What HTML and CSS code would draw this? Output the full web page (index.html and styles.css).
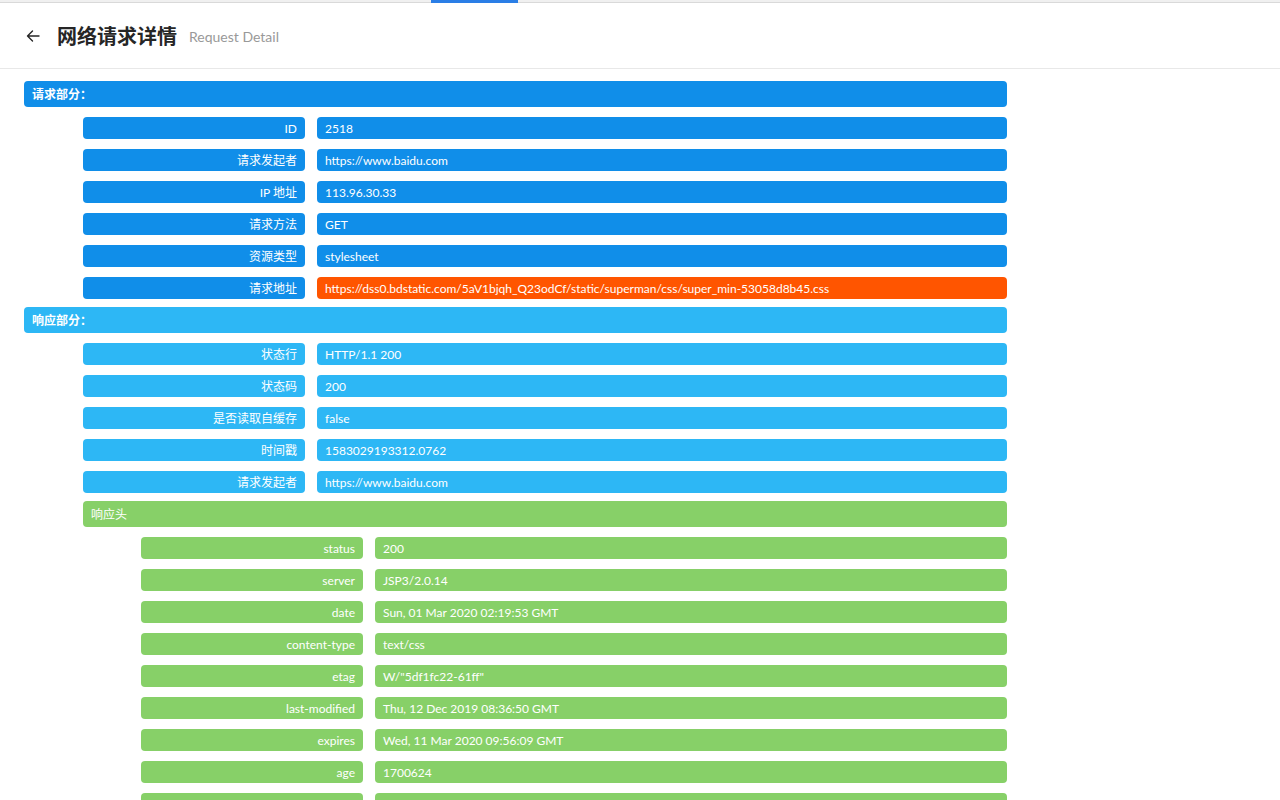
FILE: index.html
```html
<!DOCTYPE html>
<html lang="zh">
<head>
<meta charset="utf-8">
<title>网络请求详情</title>
<link rel="stylesheet" href="styles.css">
</head>
<body>
<div class="topline"><span class="topline-active"></span></div>
<header class="page-header">
  <svg class="back" width="16" height="16" viewBox="0 0 16 16"><path d="M14 8H2.5M7.5 3L2.5 8l5 5" fill="none" stroke="#262626" stroke-width="1.4" stroke-linecap="round" stroke-linejoin="round"/></svg>
  <h1 class="title">网络请求详情</h1>
  <span class="subtitle">Request Detail</span>
</header>
<main class="content">
  <div class="section blue">请求部分：</div>
  <div class="rows lvl1">
    <div class="row"><div class="key blue">ID</div><div class="val blue">2518</div></div>
    <div class="row"><div class="key blue">请求发起者</div><div class="val blue">https://www.baidu.com</div></div>
    <div class="row"><div class="key blue">IP 地址</div><div class="val blue">113.96.30.33</div></div>
    <div class="row"><div class="key blue">请求方法</div><div class="val blue">GET</div></div>
    <div class="row"><div class="key blue">资源类型</div><div class="val blue">stylesheet</div></div>
    <div class="row"><div class="key blue">请求地址</div><div class="val orange">https://dss0.bdstatic.com/5aV1bjqh_Q23odCf/static/superman/css/super_min-53058d8b45.css</div></div>
  </div>
  <div class="section cyan">响应部分：</div>
  <div class="rows lvl1">
    <div class="row"><div class="key cyan">状态行</div><div class="val cyan">HTTP/1.1 200</div></div>
    <div class="row"><div class="key cyan">状态码</div><div class="val cyan">200</div></div>
    <div class="row"><div class="key cyan">是否读取自缓存</div><div class="val cyan">false</div></div>
    <div class="row"><div class="key cyan">时间戳</div><div class="val cyan">1583029193312.0762</div></div>
    <div class="row last"><div class="key cyan">请求发起者</div><div class="val cyan">https://www.baidu.com</div></div>
    <div class="subsection green">响应头</div>
    <div class="rows lvl2">
      <div class="row"><div class="key green">status</div><div class="val green">200</div></div>
      <div class="row"><div class="key green">server</div><div class="val green">JSP3/2.0.14</div></div>
      <div class="row"><div class="key green">date</div><div class="val green">Sun, 01 Mar 2020 02:19:53 GMT</div></div>
      <div class="row"><div class="key green">content-type</div><div class="val green">text/css</div></div>
      <div class="row"><div class="key green">etag</div><div class="val green">W/"5df1fc22-61ff"</div></div>
      <div class="row"><div class="key green">last-modified</div><div class="val green">Thu, 12 Dec 2019 08:36:50 GMT</div></div>
      <div class="row"><div class="key green">expires</div><div class="val green">Wed, 11 Mar 2020 09:56:09 GMT</div></div>
      <div class="row"><div class="key green">age</div><div class="val green">1700624</div></div>
      <div class="row"><div class="key green"></div><div class="val green"></div></div>
    </div>
  </div>
</main>
</body>
</html>
```
FILE: styles.css
```css
* { box-sizing: border-box; }
html, body { margin: 0; padding: 0; background: #fff; }
body {
  font-family: Lato, "Noto Sans CJK SC", sans-serif;
  color: #262626;
  overflow: hidden;
  height: 800px;
}
.topline {
  position: relative;
  height: 3px;
  border-bottom: 1px solid #d9d9d9;
  background: #f0f0f0;
}
.topline-active {
  position: absolute;
  left: 431px;
  top: 0;
  width: 87px;
  height: 3px;
  background: #2a7ee6;
}
.page-header {
  height: 66px;
  border-bottom: 1px solid #e8e8e8;
  display: flex;
  align-items: center;
  padding-left: 25px;
}
.back { flex: none; margin-right: 16px; }
.title {
  margin: 0;
  font-family: "Noto Sans CJK SC", sans-serif;
  font-size: 20px;
  font-weight: 700;
  color: #262626;
}
.subtitle {
  margin-left: 12px;
  margin-top: 1px;
  font-size: 14px;
  color: #999;
}
.content {
  width: 1007px;
  padding: 12px 0 0 24px;
  display: flex;
  flex-direction: column;
}
.rows { display: flex; flex-direction: column; }
.lvl1 { margin-left: 59px; margin-bottom: 8px; }
.lvl2 { margin-left: 58px; }
.section, .subsection {
  height: 26px;
  line-height: 27px;
  border-radius: 4px;
  padding-left: 8px;
  color: #fff;
  font-size: 12px;
  font-weight: 700;
  margin-bottom: 10px;
}
.subsection { font-weight: 400; }
.row { display: flex; gap: 12px; height: 22px; margin-bottom: 10px; }
.rows > .row:last-child { margin-bottom: 0; }
.row.last { margin-bottom: 8px; }
.key, .val {
  height: 22px;
  line-height: 23px;
  border-radius: 4px;
  color: #fff;
  font-size: 12px;
  white-space: nowrap;
  overflow: hidden;
}
.key { width: 222px; flex: none; text-align: right; padding-right: 8px; }
.val { flex: 1; padding-left: 8px; }
.blue { background: #108ee9; }
.cyan { background: #2db7f5; }
.green { background: #87d068; }
.orange { background: #f50; }
```
